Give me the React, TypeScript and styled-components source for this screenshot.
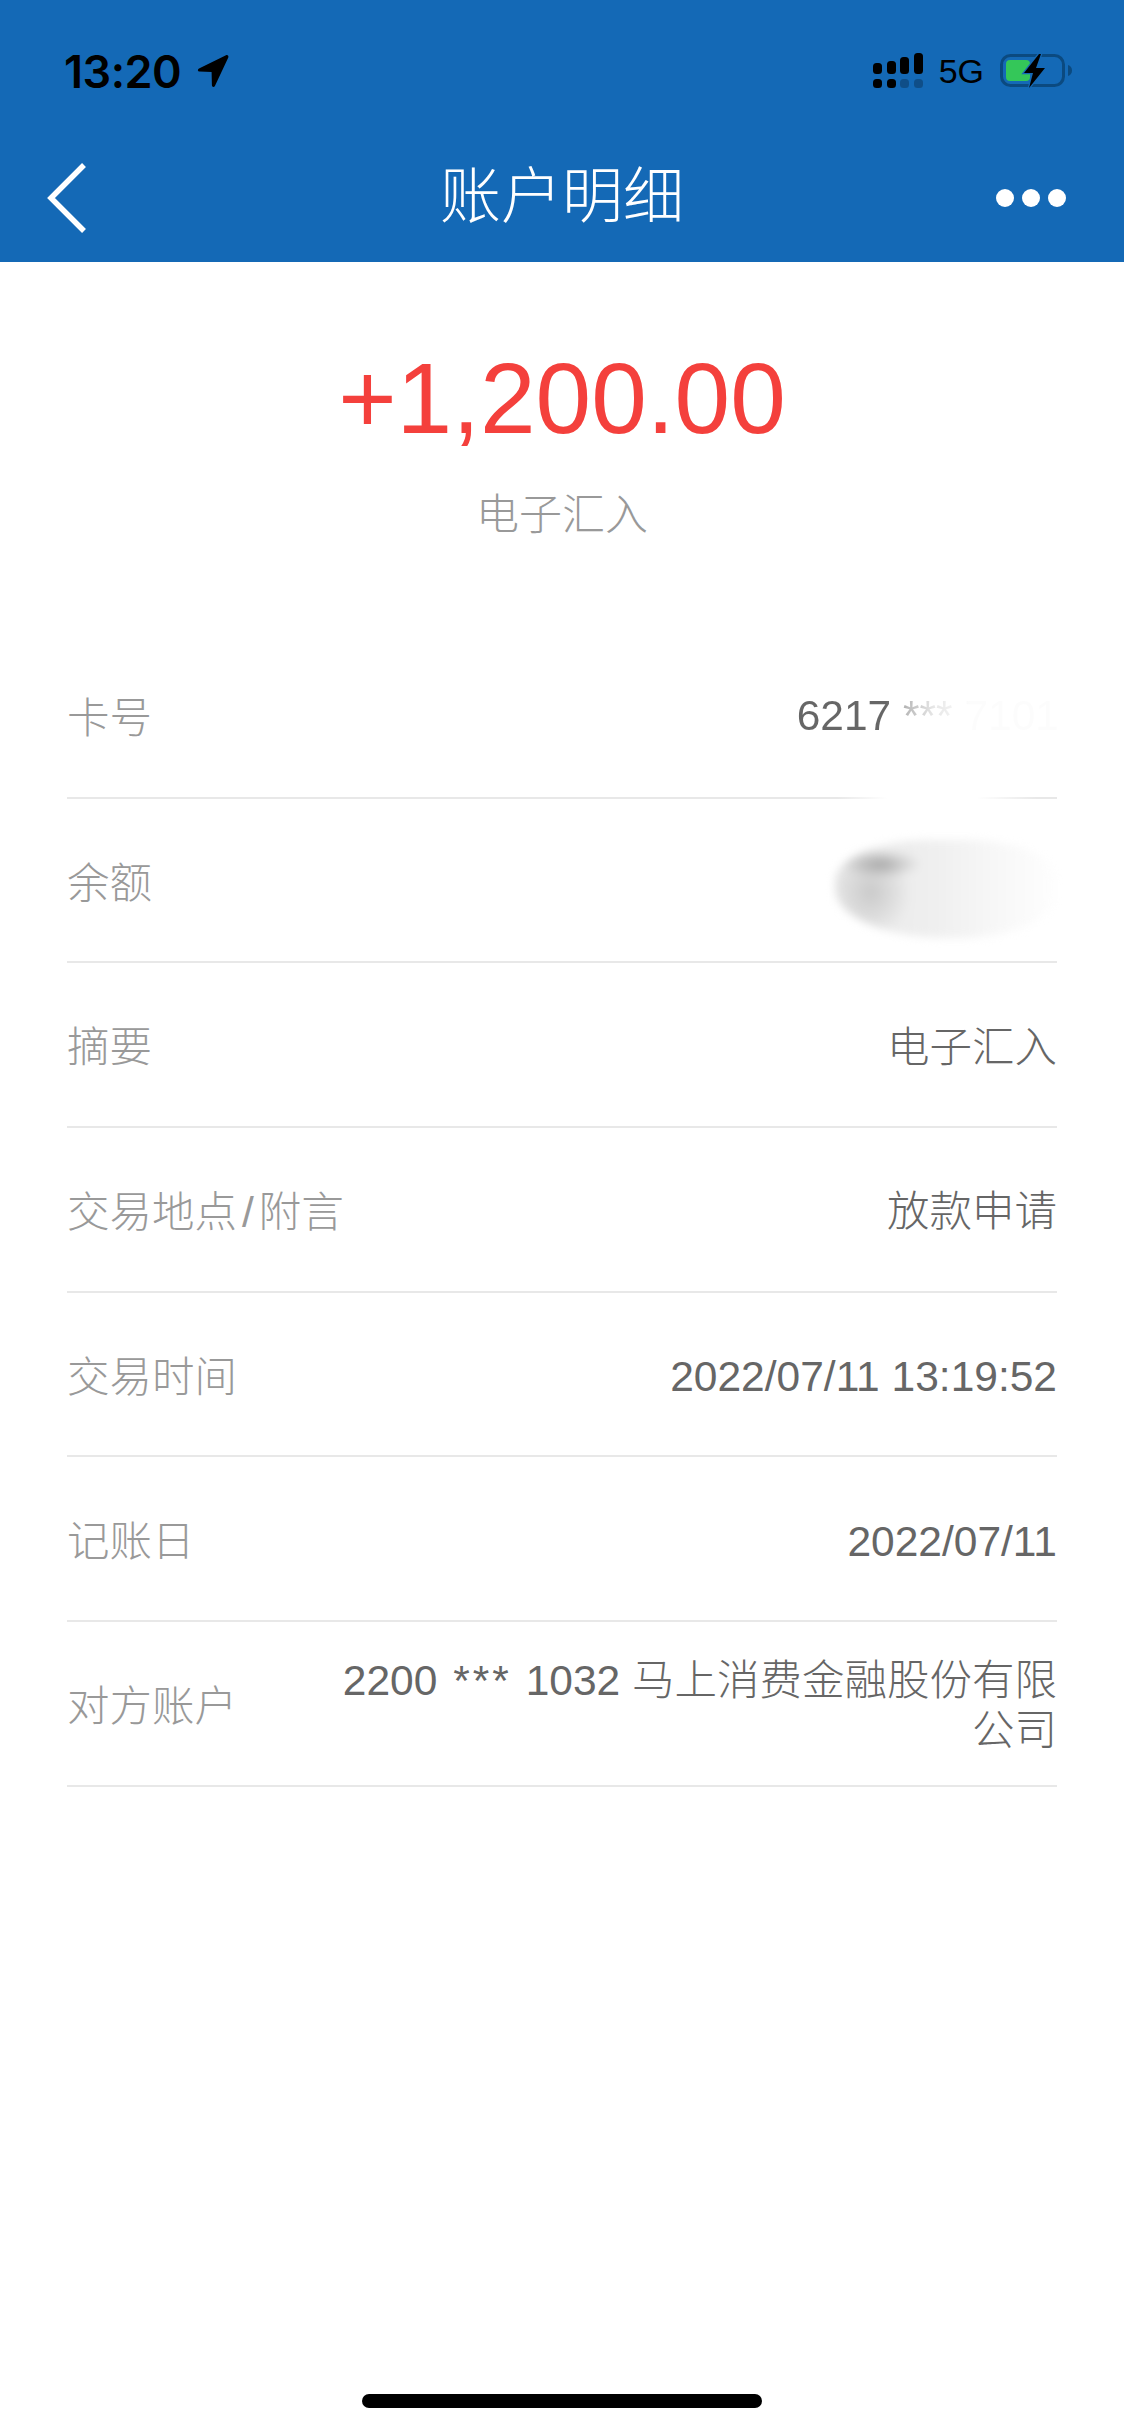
import React from "react";
import styled, { createGlobalStyle } from "styled-components";

const GlobalStyle = createGlobalStyle`
  html, body { margin: 0; padding: 0; background: #fff; }
  body { font-family: "Liberation Sans", "Noto Sans CJK SC", sans-serif; }
`;

export default function App() {
  return (
    <Page>
      <GlobalStyle />
      <Header>
        <StatusBar>
          <TimeGroup>
            <Time>13:20</Time>
            <svg width="32" height="34" viewBox="0 0 32 34">
              <path d="M29 1.2 2 14.6c-1.8 1-1.2 3 .6 3l12 .3.3 13.4c.1 2 2.300 2.300 3 .6L31.300 3.400c.6-1.600-.8-2.900-2.300-2.200Z" fill="#000" />
            </svg>
          </TimeGroup>
          <StatusIcons>
            <svg width="50" height="36" viewBox="0 0 50 36">
              <rect x="0" y="10" width="9" height="11" rx="3.500" />
              <rect x="14" y="8" width="9" height="13" rx="3.500" />
              <rect x="27" y="4" width="9" height="17" rx="3.500" />
              <rect x="41" y="0" width="9" height="21" rx="3.500" />
              <rect x="0" y="26" width="9" height="9" rx="3.500" />
              <rect x="14" y="26" width="9" height="9" rx="3.500" />
              <rect x="27" y="26" width="9" height="9" rx="3.500" opacity="0.25" />
              <rect x="41" y="26" width="9" height="9" rx="3.500" opacity="0.25" />
            </svg>
            <Network>5G</Network>
            <svg width="72" height="36" viewBox="0 0 72 36">
              <rect x="1.500" y="2.500" width="62" height="30" rx="9" fill="none" stroke="#0b4a80" strokeWidth="3" />
              <path d="M68 12c2.500.8 4 2.800 4 5.500s-1.500 4.700-4 5.500Z" fill="#0b4a80" />
              <rect x="6" y="7" width="24" height="21" rx="4" fill="#34c759" />
              <path d="M39 1 24 20h9l-4 15 16-20h-9l5-14Z" fill="#000" stroke="#1469b6" strokeWidth="2.500" paintOrder="stroke" />
            </svg>
          </StatusIcons>
        </StatusBar>
        <NavBar>
          <BackSlot>
            <svg width="42" height="72" viewBox="0 0 42 72">
              <path d="M38 3 5 36l33 33" fill="none" stroke="#fff" strokeWidth="5.500" />
            </svg>
          </BackSlot>
          <Title>账户明细</Title>
          <MoreDots>
            <Dot />
            <Dot />
            <Dot />
          </MoreDots>
        </NavBar>
      </Header>

      <Summary>
        <Amount>+1,200.00</Amount>
        <SummaryType>电子汇入</SummaryType>
      </Summary>

      <List>
        <Row $fadedLine>
          <Label>卡号</Label>
          <MaskedValue>6217 *** 7101</MaskedValue>
        </Row>
        <Row>
          <Label>余额</Label>
          <Smudge />
        </Row>
        <Row>
          <Label>摘要</Label>
          <Value>电子汇入</Value>
        </Row>
        <Row>
          <Label>
            交易地点<Slash>/</Slash>附言
          </Label>
          <Value>放款申请</Value>
        </Row>
        <Row>
          <Label>交易时间</Label>
          <Value>2022/07/11 13:19:52</Value>
        </Row>
        <Row>
          <Label>记账日</Label>
          <Value>2022/07/11</Value>
        </Row>
        <Row>
          <Label>对方账户</Label>
          <Value>
            2200 <Stars>***</Stars> 1032 马上消费金融股份有限公司
          </Value>
        </Row>
      </List>

      <HomeIndicator />
    </Page>
  );
}

const Page = styled.div`
  width: 1124px;
  height: 2432px;
  display: flex;
  flex-direction: column;
  background: #fff;
  overflow: hidden;
`;

const Header = styled.header`
  height: 262px;
  box-sizing: border-box;
  background: #1469b6;
  padding-top: 48px;
`;

const StatusBar = styled.div`
  height: 46px;
  padding: 0 52px 0 64px;
  display: flex;
  justify-content: space-between;
  align-items: center;
`;

const TimeGroup = styled.div`
  display: flex;
  align-items: center;
  gap: 16px;
`;

const Time = styled.span`
  font-family: "Inter", "Liberation Sans", sans-serif;
  font-size: 45px;
  font-weight: 600;
  color: #000;
  letter-spacing: -0.5px;
`;

const StatusIcons = styled.div`
  display: flex;
  align-items: center;
  gap: 16px;
`;

const Network = styled.span`
  font-size: 34px;
  color: #000;
`;

const NavBar = styled.nav`
  height: 104px;
  margin-top: 52px;
  padding: 0 58px;
  display: grid;
  grid-template-columns: 1fr auto 1fr;
  align-items: center;
`;

const BackSlot = styled.div`
  margin-left: -12px;
  display: flex;
  align-items: center;
`;

const Title = styled.h1`
  margin: 0 0 14px;
  font-size: 61px;
  font-weight: 300;
  color: #fff;
`;

const MoreDots = styled.div`
  display: flex;
  justify-content: flex-end;
  gap: 8px;
`;

const Dot = styled.span`
  width: 18px;
  height: 18px;
  border-radius: 50%;
  background: #fff;
`;

const Summary = styled.section`
  height: 372px;
  box-sizing: border-box;
  padding-top: 78px;
  display: flex;
  flex-direction: column;
  align-items: center;
`;

const Amount = styled.div`
  font-size: 100px;
  line-height: 116px;
  color: #f4403c;
`;

const SummaryType = styled.div`
  margin-top: 31px;
  font-size: 43px;
  font-weight: 300;
  line-height: 56px;
  color: #999;
`;

const List = styled.section`
  margin: 0 67px;
`;

const Row = styled.div<{ $fadedLine?: boolean }>`
  position: relative;
  height: 164.7px;
  box-sizing: border-box;
  border-bottom: 2px solid #e8e8e8;
  display: flex;
  align-items: center;
  justify-content: space-between;
  gap: 90px;

  ${(p) =>
    p.$fadedLine &&
    `
    &::after {
      content: "";
      position: absolute;
      left: 770px;
      right: 20px;
      bottom: -2px;
      height: 2px;
      background: linear-gradient(90deg, rgba(255,255,255,0), #fff 25%, #fff 70%, rgba(255,255,255,0));
    }
  `}
`;

const Label = styled.div`
  flex: none;
  padding-bottom: 2px;
  font-size: 42.500px;
  font-weight: 300;
  color: #999;
`;

const Slash = styled.span`
  margin: 0 5px;
`;

const Value = styled.div`
  padding-top: 6px;
  font-size: 42.500px;
  font-weight: 300;
  line-height: 50px;
  color: #666;
  text-align: right;
`;

const Stars = styled.span`
  letter-spacing: 3px;
  margin: 0 2px 0 4px;
`;

const MaskedValue = styled(Value)`
  margin-right: -2px;
  padding-bottom: 4px;
  color: transparent;
  background: linear-gradient(90deg, #666 0, #666 34%, #bbb 42%, #e6e6e6 52%, #fcfcfc 66%, #fcfcfc 100%);
  -webkit-background-clip: text;
  background-clip: text;
`;

const Smudge = styled.div`
  width: 222px;
  height: 98px;
  margin-top: 18px;
  border-radius: 42% 40% 45% 50%;
  filter: blur(4px);
  background:
    radial-gradient(ellipse 40px 14px at 46px 24px, rgba(130, 130, 130, 0.6), transparent),
    radial-gradient(ellipse 40px 44px at 36px 52px, rgba(175, 175, 175, 0.55), transparent),
    linear-gradient(90deg, #e8e8e8 0, #efefef 45%, #f8f8f8 75%, #fefefe 100%);
`;

const HomeIndicator = styled.div`
  flex: none;
  width: 400px;
  height: 14px;
  margin: auto auto 24px;
  border-radius: 7px;
  background: #000;
`;
